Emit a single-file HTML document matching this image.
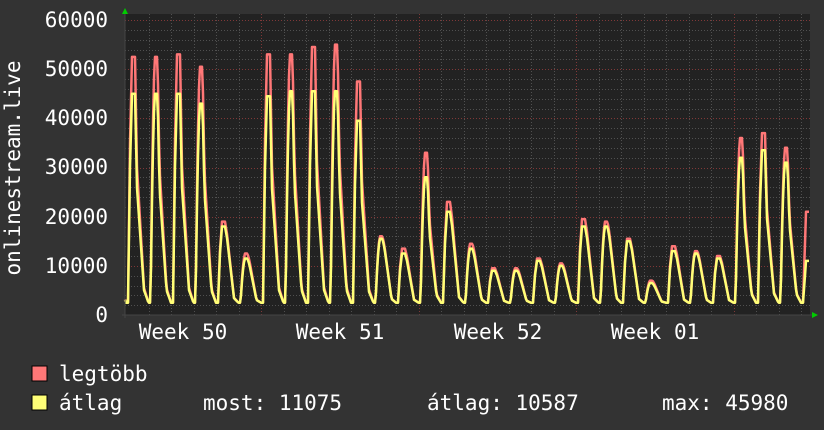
<!DOCTYPE html>
<html><head><meta charset="utf-8"><style>
html,body{margin:0;padding:0;background:#333333;width:824px;height:430px;overflow:hidden}
svg{display:block}
text{font-family:"DejaVu Sans Mono","Liberation Mono",monospace;fill:#ffffff;font-size:21px}
</style></head><body>
<svg id="g" width="824" height="430" xmlns="http://www.w3.org/2000/svg">
<rect x="125" y="14" width="685" height="301" fill="#222222"/>
<g id="grid"></g>
<g id="data"></g>
<line x1="122" y1="315" x2="812" y2="315" stroke="#444" stroke-width="1"/>
<line x1="125" y1="12" x2="125" y2="318" stroke="#444" stroke-width="1"/>
<polygon points="122,14 128,14 125,8" fill="#00cc00"/>
<polygon points="812,312 812,318 818,315" fill="#00cc00"/>
<g text-anchor="end">
<text x="108" y="27">60000</text>
<text x="108" y="76">50000</text>
<text x="108" y="125">40000</text>
<text x="108" y="174">30000</text>
<text x="108" y="224">20000</text>
<text x="108" y="273">10000</text>
<text x="108" y="322">0</text>
</g>
<text transform="translate(20,168) rotate(-90)" text-anchor="middle">onlinestream.live</text>
<g text-anchor="middle">
<text x="183" y="339">Week 50</text>
<text x="340" y="339">Week 51</text>
<text x="498" y="339">Week 52</text>
<text x="655" y="339">Week 01</text>
</g>
<rect x="32" y="366" width="15" height="15" fill="#ff7777" stroke="#000" stroke-width="1"/>
<rect x="32" y="395" width="15" height="15" fill="#ffff77" stroke="#000" stroke-width="1"/>
<text x="59" y="381">legtöbb</text>
<text x="59" y="410">átlag</text>
<text x="203" y="410">most: 11075</text>
<text x="427" y="410">átlag: 10587</text>
<text x="662" y="410">max: 45980</text>
</svg>
<script>
var NS="http://www.w3.org/2000/svg";
var grid=document.getElementById('grid'),data=document.getElementById('data');
function ln(x1,y1,x2,y2,c,d){var l=document.createElementNS(NS,'line');l.setAttribute('x1',x1);l.setAttribute('y1',y1);l.setAttribute('x2',x2);l.setAttribute('y2',y2);l.setAttribute('stroke',c);l.setAttribute('stroke-width',1);l.setAttribute('stroke-dasharray',d);grid.appendChild(l);}
function Y(v){return 315-v*295/60000;}
for(var v=2000;v<=60000;v+=2000){var y=Math.round(Y(v))+0.5;ln(125,y,810,y,v%10000==0?'#803838':'#505050','1,2');}
for(var k=1;k<31;k++){var x=Math.round(126+22.5*k)+0.5;var maj=(k%7==6);ln(x,14,x,315,maj?'#803838':'#505050','1,2');}
var P=[[52500,45000],[52500,45000],[53000,45000],[50500,43000],[19000,18000],[12500,11500],[53000,44500],[53000,45500],[54500,45500],[55000,45500],[47500,39500],[16000,15500],[13500,12500],[33000,28000],[23000,21000],[14500,13500],[9500,9000],[9500,9000],[11500,11000],[10500,10000],[19500,18000],[19000,18000],[15500,15000],[7000,6500],[14000,13000],[13000,12500],[12000,11500],[36000,32000],[37000,33500],[34000,31000],[21000,11000]];
function lerp(a,b,t){return a+(b-a)*t;}
function f(u,big){
 var d=big?0.55:0.85;
 if(u<2)return 0.0;
 if(u<4)return lerp(0,0.65,(u-2)/2);
 if(u<6)return lerp(0.65,1,(u-4)/2);
 if(u<9)return 1;
 if(u<11)return lerp(1,d,(u-9)/2);
 if(u<18)return lerp(d,0.06,(u-11)/7);
 return lerp(0.06,0,(u-18)/4.5);}
function build(idx,col,w){var pts=[];
 for(var x=125;x<=809;x++){var r=(x-126)/22.5;var di=Math.floor(r);if(di<0)di=0;if(di>30)di=30;var u=(x-126)-22.5*Math.floor(r);
  var pk=P[di][idx];var big=pk>25000;var base=2500;
  var v=base+(pk-base)*f(u,big);
  if(di==30&&x>=806)v=P[30][idx];
  pts.push(x+','+Y(v).toFixed(1));}
 var p=document.createElementNS(NS,'polyline');p.setAttribute('points',pts.join(' '));p.setAttribute('fill','none');p.setAttribute('stroke',col);p.setAttribute('stroke-width',w);p.setAttribute('stroke-linejoin','round');data.appendChild(p);}
build(0,'#ff7777',2.5);build(1,'#ffff77',2.5);
</script>
</body></html>
